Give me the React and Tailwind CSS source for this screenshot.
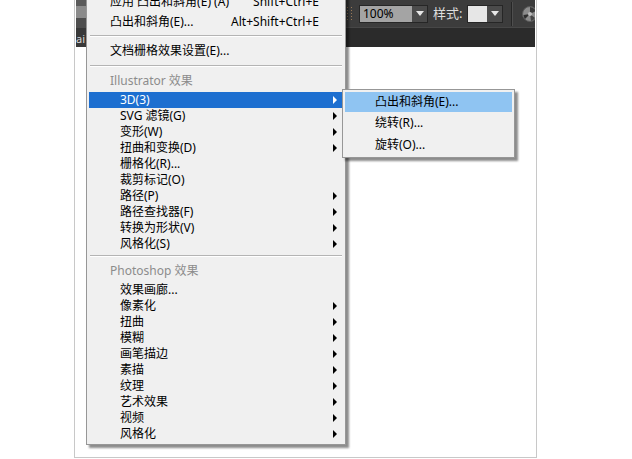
import React from "react";

const font = { fontFamily: '"Noto Sans", "Noto Sans CJK SC", sans-serif' };

const Arrow = ({ white }) => (
  <span
    className={`w-0 h-0 border-y-[4px] border-y-transparent border-l-[4px] ${
      white ? "border-l-white" : "border-l-black"
    }`}
  />
);

const Item = ({ label, sub, active }) => (
  <div
    className={`mx-[2px] h-[16px] flex items-center justify-between pl-[31px] pr-[6px] ${
      active ? "bg-[#1d6fd0] text-white" : "text-black"
    }`}
  >
    <span>{label}</span>
    {sub && <Arrow white={active} />}
  </div>
);

const Separator = () => (
  <div className="mx-[3px] py-[3px]">
    <div className="border-t border-[#b4b4b4]" />
    <div className="border-t border-white" />
  </div>
);

const illustrator = [
  ["SVG 滤镜(G)", true],
  ["变形(W)", true],
  ["扭曲和变换(D)", true],
  ["栅格化(R)...", false],
  ["裁剪标记(O)", false],
  ["路径(P)", true],
  ["路径查找器(F)", true],
  ["转换为形状(V)", true],
  ["风格化(S)", true],
];

const photoshop = [
  ["效果画廊...", false],
  ["像素化", true],
  ["扭曲", true],
  ["模糊", true],
  ["画笔描边", true],
  ["素描", true],
  ["纹理", true],
  ["艺术效果", true],
  ["视频", true],
  ["风格化", true],
];

const Globe = () => (
  <svg width="16" height="16" viewBox="0 0 16 16">
    <circle cx="8" cy="8" r="7.5" fill="#8c8c8c" stroke="#5a5a5a" />
    <path d="M8 8 L8 1 A7 7 0 0 1 14 5 Z" fill="#3a3a3a" />
    <path d="M8 8 L3 13 A7 7 0 0 1 1.5 9 Z" fill="#2f2f2f" />
    <path d="M8 8 L13 12 A7 7 0 0 1 9 15 Z" fill="#444" />
    <circle cx="8" cy="8" r="2" fill="#bdbdbd" />
  </svg>
);

const Caret = () => (
  <span className="w-0 h-0 border-x-[4px] border-x-transparent border-t-[5px] border-t-[#e8e8e8]" />
);

export default function App() {
  return (
    <div className="relative w-[632px] h-[459px] bg-white overflow-hidden text-[12px]" style={font}>
      {/* document window */}
      <div className="ml-[74px] w-[463px] h-[458px] border-x border-b border-[#c8c8c8] px-[1px]">
        <div className="h-[47px] flex">
          {/* tab strip */}
          <div className="w-[10px] shrink-0 flex flex-col">
            <div className="h-[6px] bg-[#5a5a5a]" />
            <div className="h-[12px] bg-[#8b8b8b]" />
            <div className="h-[10px] bg-[#4e4e4e]" />
            <div className="flex-1 bg-[#383838] text-[#d8d8d8] text-[11px] leading-none pt-[5px] overflow-hidden whitespace-nowrap">
              ai
            </div>
          </div>
          {/* control bar */}
          <div className="flex-1 min-w-0 flex flex-col">
            <div className="h-[27px] bg-[#3c3c3c] flex items-center pl-[261px] overflow-hidden whitespace-nowrap">
              <div className="grid grid-cols-2 gap-[2px] w-[5px] mr-[7px] shrink-0">
                {Array.from({ length: 10 }).map((_, i) => (
                  <span key={i} className="w-[1px] h-[1px] bg-[#9a7a58]" />
                ))}
              </div>
              <div className="h-[18px] flex shrink-0 border border-[#262626]">
                <div className="w-[52px] bg-[#a4a4a4] text-black text-[12px] leading-none flex items-center pl-[3px]">
                  100%
                </div>
                <div className="w-[15px] bg-[#4b4b4b] flex items-center justify-center">
                  <Caret />
                </div>
              </div>
              <span className="ml-[5px] shrink-0 text-[#dedede] text-[13px] leading-none">样式:</span>
              <div className="ml-[5px] h-[18px] flex shrink-0 border border-[#262626]">
                <div className="w-[19px] bg-[#e6e6e6]" />
                <div className="w-[15px] bg-[#4b4b4b] flex items-center justify-center">
                  <Caret />
                </div>
              </div>
              <div className="ml-[8px] shrink-0 w-[2px] h-[24px] bg-[#262626] border-r border-[#4e4e4e]" />
              <div className="ml-[9px] shrink-0 w-[14px] overflow-hidden">
                <Globe />
              </div>
            </div>
            <div className="flex-1 bg-[#2b2b2b] border-t border-[#474747]" />
          </div>
        </div>
      </div>

      {/* effect menu */}
      <div className="absolute left-[86px] top-[-9px] w-[260px] bg-[#f0f0f0] border border-[#979797] shadow-[3px_3px_2px_rgba(0,0,0,0.45)] leading-none pb-[2px]">
        <div className="h-[20px] flex items-center justify-between pl-[23px] pr-[26px]">
          <span>应用 凸出和斜角(E) (A)</span>
          <span>Shift+Ctrl+E</span>
        </div>
        <div className="h-[20px] flex items-center justify-between pl-[23px] pr-[26px]">
          <span>凸出和斜角(E)...</span>
          <span>Alt+Shift+Ctrl+E</span>
        </div>
        <Separator />
        <div className="h-[22px] flex items-center pl-[23px]">文档栅格效果设置(E)...</div>
        <Separator />
        <div className="h-[22px] flex items-center pl-[23px] text-[#8c8c8c]">Illustrator 效果</div>
        <Item label="3D(3)" sub active />
        {illustrator.map(([l, s]) => (
          <Item key={l} label={l} sub={s} />
        ))}
        <Separator />
        <div className="h-[22px] flex items-center pl-[23px] text-[#8c8c8c]">Photoshop 效果</div>
        {photoshop.map(([l, s]) => (
          <Item key={l + "p"} label={l} sub={s} />
        ))}
      </div>

      {/* 3D submenu */}
      <div className="absolute left-[342px] top-[89px] w-[173px] bg-[#f0f0f0] border border-[#979797] shadow-[3px_3px_2px_rgba(0,0,0,0.45)] leading-none py-[2px]">
        <div className="mx-[2px] h-[20px] flex items-center pl-[30px] bg-[#8fc4f2] text-black">凸出和斜角(E)...</div>
        <div className="mx-[2px] h-[22px] flex items-center pl-[30px]">绕转(R)...</div>
        <div className="mx-[2px] h-[21px] flex items-center pl-[30px]">旋转(O)...</div>
      </div>
    </div>
  );
}
